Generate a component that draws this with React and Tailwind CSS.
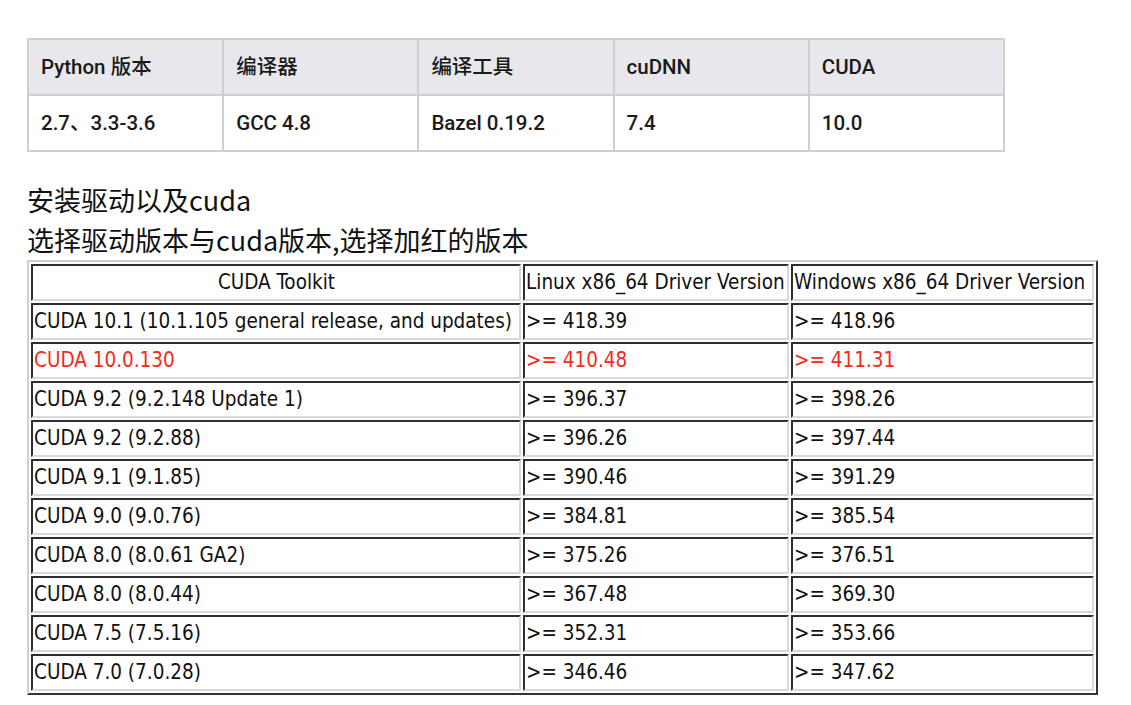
import React from 'react';

const envHead = ['Python 版本', '编译器', '编译工具', 'cuDNN', 'CUDA'];
const envRow = ['2.7、3.3-3.6', 'GCC 4.8', 'Bazel 0.19.2', '7.4', '10.0'];

const drivers = [
  ['CUDA 10.1 (10.1.105 general release, and updates)', '>= 418.39', '>= 418.96'],
  ['CUDA 10.0.130', '>= 410.48', '>= 411.31', true],
  ['CUDA 9.2 (9.2.148 Update 1)', '>= 396.37', '>= 398.26'],
  ['CUDA 9.2 (9.2.88)', '>= 396.26', '>= 397.44'],
  ['CUDA 9.1 (9.1.85)', '>= 390.46', '>= 391.29'],
  ['CUDA 9.0 (9.0.76)', '>= 384.81', '>= 385.54'],
  ['CUDA 8.0 (8.0.61 GA2)', '>= 375.26', '>= 376.51'],
  ['CUDA 8.0 (8.0.44)', '>= 367.48', '>= 369.30'],
  ['CUDA 7.5 (7.5.16)', '>= 352.31', '>= 353.66'],
  ['CUDA 7.0 (7.0.28)', '>= 346.46', '>= 347.62'],
];

const cell =
  'h-[37px] p-0 pl-[1px] align-middle border-2 border-t-[#2e2e2e] border-l-[#2e2e2e] border-b-[#d9d9d9] border-r-[#d9d9d9] whitespace-nowrap';

export default function App() {
  return (
    <div className="min-h-screen bg-white pt-[38px] pl-[27px]">
      <table className="w-[978px] table-fixed border-collapse font-['Roboto','Noto_Sans_CJK_SC',sans-serif] text-[20.5px] font-medium text-[#1a1a1a]">
        <tbody>
          <tr className="bg-[#e8e8ec]">
            {envHead.map((h) => (
              <td key={h} className="h-[56px] border-2 border-[#cfcfcf] pl-[12px] align-middle">
                {h}
              </td>
            ))}
          </tr>
          <tr>
            {envRow.map((v) => (
              <td key={v} className="h-[56px] border-2 border-[#cfcfcf] pl-[12px] align-middle">
                {v}
              </td>
            ))}
          </tr>
        </tbody>
      </table>

      <div className="mt-[28px] font-['Noto_Sans_CJK_SC',sans-serif] text-[27px] leading-[40px] text-[#111]">
        <p>安装驱动以及cuda</p>
        <p>选择驱动版本与cuda版本,选择加红的版本</p>
      </div>

      <table className="border-separate border-spacing-[2px] border-2 border-t-[#cfcfcf] border-l-[#cfcfcf] border-b-[#333] border-r-[#333] font-['DejaVu_Sans_Condensed','DejaVu_Sans',sans-serif] [font-stretch:condensed] text-[20.5px] text-[#111]">
        <tbody>
          <tr>
            <td className={`${cell} w-[490px] text-center`}>CUDA Toolkit</td>
            <td className={`${cell} w-[266px]`}>Linux x86_64 Driver Version</td>
            <td className={`${cell} w-[303px]`}>Windows x86_64 Driver Version</td>
          </tr>
          {drivers.map(([name, linux, win, red]) => (
            <tr key={name} className={red ? 'text-[#f42a1a]' : ''}>
              <td className={cell}>{name}</td>
              <td className={cell}>{linux}</td>
              <td className={cell}>{win}</td>
            </tr>
          ))}
        </tbody>
      </table>
    </div>
  );
}
